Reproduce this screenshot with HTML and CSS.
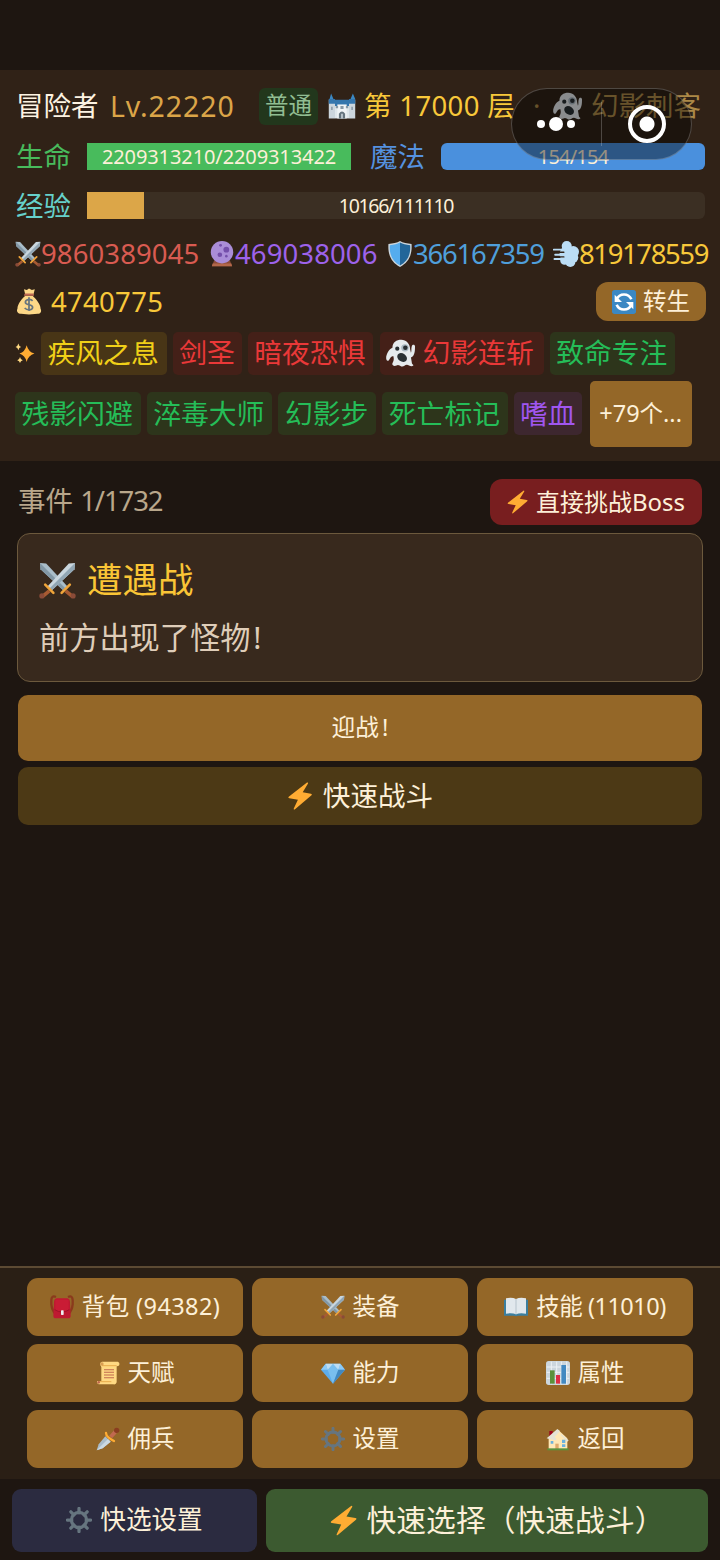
FILE: index.html
```html
<!DOCTYPE html>
<html lang="zh-CN">
<head>
<meta charset="utf-8">
<title>冒险者</title>
<link rel="stylesheet" href="styles.css">
</head>
<body>
<svg class="sprite" aria-hidden="true">
  <symbol id="swords" viewBox="0 0 36 36">
    <path d="M1 1l6 .5L28 24l-4 4L1.500 7z" fill="#a9bdc9"/><path d="M1 1l25 25-2 2L1.500 7z" fill="#8297a5"/>
    <path d="M35 1l-6 .5L8 24l4 4L34.500 7z" fill="#c9d6de"/><path d="M35 1L10 26l2 2L34.500 7z" fill="#91a6b4"/>
    <path d="M10 28l-7 6M26 28l7 6" stroke="#a85b32" stroke-width="3.500"/><path d="M6 22l8 8M30 22l-8 8" stroke="#f0a53a" stroke-width="2.500" stroke-linecap="round"/>
    <circle cx="2.800" cy="33" r="2.500" fill="#8a4b38"/><circle cx="33.200" cy="33" r="2.500" fill="#8a4b38"/>
  </symbol>
  <symbol id="castle" viewBox="0 0 36 36">
    <path d="M2 9L4 2l3 7zM29 9l3-7 3 7z" fill="#3b88c3"/><path d="M1 10h8v24H1zM27 10h8v24h-8z" fill="#ccd6dd"/><path d="M1 9h8v6H1zM27 9h8v6h-8zM9 10h18v8H9z" fill="#3476ad"/>
    <path d="M9 18h18v16H9z" fill="#dfe7eb"/><path d="M12 16h12v18H12z" fill="#f0f4f6"/><path d="M10 18h3v3h-3zM16 18h4v4h-4zM23 18h3v3h-3zM4 19h2v4H4zM30 19h2v4h-2z" fill="#8899a6"/><path d="M14 34v-6q4-6 8 0v6z" fill="#66757f"/><path d="M17 28h2v6h-2z" fill="#ccd6dd"/>
  </symbol>
  <symbol id="ghost" viewBox="0 0 36 36">
    <path d="M8 11C8 4 13 1 19 1s11 5 11 12l1 4c1-2 0-5 1-8 1-3 4-2 4 0 0 5 0 12-5 14l1 6c0 3 2 2 2 4-3 2-6-1-8-1-3 0-4 3-7 2-2-1-4-3-6-1-3 1-6 0-5-3 2-3 2-6 1-9-5 1-4 6-7 6-4-1-1-13 6-16z" fill="#e6eaed"/>
    <circle cx="14" cy="12" r="2.600" fill="#292f33"/><circle cx="23.500" cy="11" r="4.600" fill="#aab8c2"/><circle cx="24" cy="11" r="2.800" fill="#292f33"/><ellipse cx="20" cy="23" rx="6.500" ry="5" transform="rotate(35 20 23)" fill="#292f33"/>
  </symbol>
  <symbol id="ball" viewBox="0 0 36 36">
    <path d="M7 27h22l3 8H4z" fill="#8a4b38"/><path d="M5 31h26l1 4H4z" fill="#b3684a"/><circle cx="18" cy="15.500" r="15.500" fill="#aa8dd8"/><circle cx="24" cy="12" r="4" fill="#744eaa"/><circle cx="15" cy="19" r="3.200" fill="#744eaa"/><circle cx="16" cy="6" r="2" fill="#744eaa"/><circle cx="24" cy="21" r="1.800" fill="#744eaa"/>
  </symbol>
  <symbol id="shield" viewBox="0 0 36 36">
    <path d="M18 0c4 3 10 3 16 4 1 14-3 25-16 32C5 29 1 18 2 4c6-1 12-1 16-4z" fill="#ccd6dd"/><path d="M18 2v32C7 28 3 18 4 6c6-1 10-2 14-4z" fill="#55acee"/><path d="M18 2v32c11-6 15-16 14-28-6-1-10-2-14-4z" fill="#226699"/>
  </symbol>
  <symbol id="dash" viewBox="0 0 36 36">
    <g fill="#bbddf5"><circle cx="19" cy="7" r="7"/><circle cx="28" cy="15" r="8"/><circle cx="28" cy="23" r="7"/><circle cx="24" cy="29" r="7"/><circle cx="16" cy="27" r="6"/><circle cx="20" cy="18" r="11"/></g>
    <path d="M1 12h14M3 19h11M2 25h14" fill="none" stroke="#bbddf5" stroke-width="2.600" stroke-linecap="round"/><path d="M3 15.500h12M5 22h10" fill="none" stroke="#302217" stroke-width="2" stroke-linecap="round"/>
  </symbol>
  <symbol id="money" viewBox="0 0 36 36">
    <path d="M11 1l4 1 3-2 4 2 4-1-2 8H13z" fill="#fdd888"/><path d="M13 10c-4 3-11 11-11 18-2 4 1 7 5 7l11 1 12-1c4 0 6-3 4-7 0-7-7-14-11-18z" fill="#fdd888"/><path d="M12 7h12l1 3H11z" fill="#bf6952"/><path d="M23 17c-3-3-10-2-10 2 0 5 10 2 10 7 0 4-7 5-11 1M18 12v19" fill="none" stroke="#67757f" stroke-width="2.400"/>
  </symbol>
  <symbol id="cycle" viewBox="0 0 36 36">
    <rect width="36" height="36" rx="4" fill="#3b88c3"/><path d="M7 14A12 12 0 0 1 29 14M29 22A12 12 0 0 1 7 22" fill="none" stroke="#fff" stroke-width="4"/><path d="M4 7v11h11zM32 29V18H21z" fill="#fff"/>
  </symbol>
  <symbol id="sparkles" viewBox="0 0 36 36">
    <path d="M21 4q3 12 14 15-11 3-14 15-3-12-13-15 10-3 13-15z" fill="#ffac33"/><path d="M6 1q1 5 5 6-4 1-5 6-1-5-5-6 4-1 5-6zM9 25q1 5 5 6-4 1-5 5-1-4-5-5 4-1 5-6z" fill="#ffd983"/>
  </symbol>
  <symbol id="bolt" viewBox="0 0 32 36">
    <path d="M25 .8L1.500 19q-1.500 1.600.8 2l11 1.800L8 34q-.6 2 1.200 1.200L30.800 17q1.400-1.600-.8-2l-10.500-1.800L26.300 2q.5-1.900-1.300-1.200z" fill="#ffac33"/>
  </symbol>
  <symbol id="pack" viewBox="0 0 36 36">
    <path d="M9 3Q2 0 2 8v6q1 9 6 14M27 3q7-3 7 5v6q-1 9-6 14" fill="none" stroke="#8a3a1c" stroke-width="3.500"/><path d="M10 5h16q4 1 4 6l1 20q0 4-4 4H9q-4 0-4-4l1-20q0-5 4-6z" fill="#be1931"/><path d="M8 7h20v16q-10 6-20 0z" fill="#c91c35"/><path d="M7 22q11 7 22 0" fill="none" stroke="#9e1228" stroke-width="1.500"/><rect x="16.500" y="23" width="4" height="7" rx="1" fill="#eceff1"/>
  </symbol>
  <symbol id="book" viewBox="0 0 36 36">
    <path d="M0 7h36v24H21l-3 1-3-1H0z" fill="#3b7f9f"/><path d="M3 5q9-2 15 1v23q-6-3-15-1zM33 5q-9-2-15 1v23q6-3 15-1z" fill="#e1e8ed"/><path d="M18 6v23" stroke="#b6c3cc" stroke-width="1.500"/>
  </symbol>
  <symbol id="scroll" viewBox="0 0 36 36">
    <path d="M9 1h24q3 1 2 5-1 2-4 2v24q-1 4-5 3H4q-4-2-2-5h6V9Q4 3 9 1z" fill="#ffd983"/><path d="M9 7h22M3 31h20" stroke="#e39f3d" stroke-width="1.200"/><circle cx="9" cy="4.500" r="2.500" fill="#d99e52"/><circle cx="4" cy="32" r="2" fill="#c1694f"/><path d="M12 13h15M12 17h15M12 21h15M12 25h15" stroke="#c1694f" stroke-width="1.600"/>
  </symbol>
  <symbol id="gem" viewBox="0 0 36 36">
    <path d="M7 4h22l7 9-18 21L0 13z" fill="#5dadec"/><path d="M7 4l3 9H0zM29 4l-3 9h10z" fill="#8ccaf7"/><path d="M7 4h22l-3 9H10z" fill="#bdddf4"/><path d="M18 4l8 9H10zM10 13h16l-8 21z" fill="#79bfef"/><path d="M26 13h10L18 34z" fill="#4289c1"/>
  </symbol>
  <symbol id="chart" viewBox="0 0 36 36">
    <rect width="36" height="36" rx="4" fill="#ccd6dd"/><path d="M8 1v34M16 1v34M23 1v34M31 1v34M1 9h34M1 17h34M1 26h34" stroke="#edf1f4" stroke-width="1.500"/><path d="M6 14h7v20H6z" fill="#5c913b"/><path d="M15 21h6v13h-6z" fill="#dd2e44"/><path d="M23 6h7v28h-7z" fill="#4289c1"/>
  </symbol>
  <symbol id="dagger" viewBox="0 0 36 36">
    <path d="M14 14l8 8L10 32 1 35l3-9z" fill="#aabdca"/><path d="M18 18L1 35l9-3 12-10z" fill="#ccd9e1"/><path d="M22 15l8-9" stroke="#c1694f" stroke-width="6"/><circle cx="31" cy="5" r="4" fill="#8a3d20"/><path d="M15 9q0 4 4 7t8 5" fill="none" stroke="#ffac33" stroke-width="3.500" stroke-linecap="round"/>
  </symbol>
  <symbol id="gear" viewBox="0 0 36 36">
    <path d="M18 2v6M18 28v6M2 18h6M28 18h6M6.700 6.700l4.300 4.300M25 25l4.300 4.300M29.300 6.700L25 11M11 25l-4.300 4.300" fill="none" stroke="currentColor" stroke-width="4.500" stroke-linecap="round"/><circle cx="18" cy="18" r="10.500" fill="none" stroke="currentColor" stroke-width="4.500"/>
  </symbol>
  <symbol id="house" viewBox="0 0 36 36">
    <path d="M5 6h5v9H5z" fill="#a0041e"/><path d="M4 16L18 4l14 13v16H4z" fill="#ffe8b6"/><path d="M1 17L17 3l4 3-8 9 3 3 7-7 11 9-2 2L22 12l-8 8-9-2z" fill="#e6e3d6"/><path d="M7 21h4v4H7zM24 19h5v5h-5zM24 26h5v4h-5z" fill="#6cb2dd"/><path d="M14 25h5v8h-5z" fill="#dfaa6a"/><path d="M2 32h32v3H2z" fill="#5c913b"/>
  </symbol>
</svg>

<div class="app">
  <header class="hero">
    <div class="row title-row">
      <span class="name">冒险者</span>
      <span class="level">Lv.22220</span>
      <span class="mode">普通</span>
      <svg class="ic ic-castle"><use href="#castle"/></svg>
      <span class="floor">第 17000 层</span>
      <span class="job"><span class="sep">·</span><svg class="ic"><use href="#ghost"/></svg><span>幻影刺客</span></span>
    </div>
    <div class="row">
      <span class="label hp">生命</span>
      <div class="bar hp-bar"><span class="hp-text">2209313210/2209313422</span></div>
      <span class="label mp">魔法</span>
      <div class="bar mp-bar"><span class="mp-text">154/154</span></div>
    </div>
    <div class="row">
      <span class="label xp">经验</span>
      <div class="bar xp-bar"><div class="fill" style="width:9.15%"></div><span class="xp-text">10166/111110</span></div>
    </div>
    <div class="row stats">
      <span class="stat atk"><svg class="ic"><use href="#swords"/></svg>9860389045</span>
      <span class="stat mag"><svg class="ic"><use href="#ball"/></svg>469038006</span>
      <span class="stat def"><svg class="ic"><use href="#shield"/></svg>366167359</span>
      <span class="stat spd"><svg class="ic"><use href="#dash"/></svg>819178559</span>
    </div>
    <div class="row gold-row">
      <span class="gold"><svg class="ic"><use href="#money"/></svg>4740775</span>
      <button class="rebirth"><svg class="ic"><use href="#cycle"/></svg>转生</button>
    </div>
    <div class="tags first">
      <svg class="ic ic-spark"><use href="#sparkles"/></svg>
      <span class="tag gold-tag">疾风之息</span>
      <span class="tag red-tag">剑圣</span>
      <span class="tag red-tag">暗夜恐惧</span>
      <span class="tag red-tag ghost-tag"><svg class="ic"><use href="#ghost"/></svg>幻影连斩</span>
      <span class="tag green-tag">致命专注</span>
    </div>
    <div class="tags">
      <span class="tag green-tag">残影闪避</span>
      <span class="tag green-tag">淬毒大师</span>
      <span class="tag green-tag">幻影步</span>
      <span class="tag green-tag">死亡标记</span>
      <span class="tag purple-tag">嗜血</span>
      <button class="more">+79个...</button>
    </div>
  </header>

  <main class="main">
    <div class="event-head">
      <span class="event-count">事件 <span class="count">1/1732</span></span>
      <button class="boss"><svg class="ic"><use href="#bolt"/></svg>直接挑战Boss</button>
    </div>
    <section class="card">
      <h2><svg class="ic"><use href="#swords"/></svg>遭遇战</h2>
      <p>前方出现了怪物<span class="bang">!</span></p>
    </section>
    <button class="fight">迎战<span class="bang">!</span></button>
    <button class="fight quick"><svg class="ic"><use href="#bolt"/></svg>快速战斗</button>
  </main>

  <nav class="menu">
    <button class="bag"><svg class="ic"><use href="#pack"/></svg>背包 (94382)</button>
    <button><svg class="ic"><use href="#swords"/></svg>装备</button>
    <button class="skill"><svg class="ic"><use href="#book"/></svg>技能 (11010)</button>
    <button><svg class="ic"><use href="#scroll"/></svg>天赋</button>
    <button><svg class="ic"><use href="#gem"/></svg>能力</button>
    <button><svg class="ic"><use href="#chart"/></svg>属性</button>
    <button><svg class="ic"><use href="#dagger"/></svg>佣兵</button>
    <button><svg class="ic gear"><use href="#gear"/></svg>设置</button>
    <button><svg class="ic"><use href="#house"/></svg>返回</button>
  </nav>
  <footer class="dock">
    <button class="dock-set"><svg class="ic gear"><use href="#gear"/></svg>快选设置</button>
    <button class="dock-go"><svg class="ic"><use href="#bolt"/></svg>快速选择（快速战斗<span class="close">）</span></button>
  </footer>

  <div class="capsule">
    <div class="capsule-half"><i class="dot"></i><i class="dot big"></i><i class="dot"></i></div>
    <div class="capsule-line"></div>
    <div class="capsule-half"><i class="ring"></i></div>
  </div>
</div>
</body>
</html>
```
FILE: styles.css
```css
* { box-sizing: border-box; }
body { margin: 0; background: #1e1611; }
.app {
  position: relative;
  display: flex;
  flex-direction: column;
  width: 720px;
  height: 1560px;
  padding-top: 70px;
  overflow: hidden;
  background: #1e1611;
  color: #fdf0d8;
  font: 400 27.5px/1 "Noto Sans", "Noto Sans CJK SC", sans-serif;
  white-space: nowrap;
}
.sprite { position: absolute; width: 0; height: 0; }
.ic { display: block; flex: none; width: 26px; height: 26px; }
button {
  display: flex;
  align-items: center;
  justify-content: center;
  margin: 0;
  padding: 0;
  border: 0;
  font: inherit;
  color: inherit;
  background: #946728;
  white-space: nowrap;
}

.hero { flex: none; height: 391px; padding: 10px 15px 0 16px; background: #302217; }
.row { display: flex; align-items: center; height: 49px; }
.title-row { height: 52px; }
.name { width: 94px; color: #fdf3e2; }
.level { width: 149px; color: #dba548; font-size: 28.5px; letter-spacing: .9px; }
.mode {
  display: flex;
  align-items: center;
  justify-content: center;
  width: 59px;
  height: 37px;
  margin-right: 10px;
  border-radius: 6px;
  background: #22371c;
  color: #91bd92;
  font-size: 23.5px;
}
.ic-castle { width: 28px; height: 28px; margin-right: 8px; }
.floor { width: 169px; color: #f8c83a; letter-spacing: .35px; }
.job { display: flex; align-items: center; width: 172px; color: #ac8947; }
.job .sep { width: 20px; }
.job .ic { width: 29px; height: 29px; margin-right: 9px; }
.label { width: 71px; }
.hp { color: #48bb5c; }
.mp { width: 71px; margin-left: 19px; color: #5591df; }
.xp { color: #66d1cb; }
.bar {
  position: relative;
  display: flex;
  align-items: center;
  justify-content: center;
  height: 27.5px;
  font-size: 20px;
  overflow: hidden;
}
.hp-bar { width: 264px; background: #48bb5c; }
.mp-bar { width: 264px; border-radius: 6px; background: #4a90dd; }
.xp-bar { width: 618px; border-radius: 0 6px 6px 0; background: #3b2f23; }
.fill { position: absolute; left: 0; top: 0; bottom: 0; background: #dca648; }
.xp-text { letter-spacing: -1.3px; font-size: 19.5px; }
.mp-text { letter-spacing: -.8px; }
.hp-text { letter-spacing: -.1px; }

.stats { height: 48px; }
.stat { display: flex; align-items: center; flex: none; margin-left: -1px; }
.atk { width: 195px; color: #d95b51; letter-spacing: .1px; }
.mag { width: 179px; color: #9d62eb; letter-spacing: .1px; }
.def { width: 167px; color: #4f9fdb; letter-spacing: -1.2px; }
.spd { color: #f8c83a; letter-spacing: -1.4px; }
.gold-row { height: 47px; justify-content: space-between; }
.gold { display: flex; align-items: center; gap: 9px; color: #f8c83a; letter-spacing: .3px; }
.gold .ic { height: 29px; }
.rebirth { width: 110px; height: 39px; margin-right: -1px; border-radius: 12px; gap: 7px; font-size: 23.5px; }
.rebirth .ic { width: 24px; height: 24px; }

.tags { display: flex; align-items: center; gap: 6px; height: 66px; margin-left: -1px; }
.tags.first { height: 42px; margin: 7px 0 6.5px -1px; }
.ic-spark { width: 20px; height: 20px; }
.tag { display: flex; align-items: center; flex: none; height: 43px; padding: 0 8px 0 6.5px; border-radius: 5px; font-size: 27.8px; }
.gold-tag { color: #f0d018; background: #483516; }
.red-tag { color: #ea3838; background: #442018; padding-right: 7px; }
.ghost-tag { padding: 0 10px 0 6px; margin-left: 1px; }
.ghost-tag .ic { width: 29px; height: 29px; margin-right: 8px; }
.green-tag { color: #25bd58; background: #2d351b; }
.purple-tag { color: #a056f0; background: #3d272f; padding: 0 6px; }
.more { width: 102px; height: 66px; margin-left: 2px; border-radius: 5px; font-size: 23.5px; }

.main { flex: 1; padding: 18px 18px 0; }
.event-head { display: flex; align-items: center; justify-content: space-between; height: 46px; }
.event-count { margin-top: -2px; color: #b9a78b; }
.count { letter-spacing: -1.1px; }
.boss { width: 212px; height: 46px; border-radius: 12px; background: #781e1f; font-size: 24px; gap: 8px; }
.boss .ic { width: 21px; height: 24px; }
.card {
  height: 149px;
  margin: 8px -1px 13px;
  padding: 26px 21px 0;
  border: 1.5px solid #6c593d;
  border-radius: 13px;
  background: #38291d;
}
.card h2 { display: flex; align-items: center; gap: 11px; height: 40px; margin: 0 0 18px; color: #fac536; font-size: 35.5px; font-weight: 400; }
.card h2 .ic { width: 37px; height: 37px; }
.card p { margin: 0; height: 40px; line-height: 40px; color: #dfcdb9; font-size: 30.2px; }
.bang { margin-left: 3px; }
.fight { width: 100%; height: 66px; margin-bottom: 6px; border-radius: 10px; font-size: 23.7px; }
.quick { height: 58px; background: #4c3915; font-size: 27.6px; gap: 10px; }
.quick .ic { height: 28px; }

.menu {
  flex: none;
  display: grid;
  grid-template-columns: repeat(3, 216px);
  grid-auto-rows: 57.5px;
  justify-content: center;
  gap: 8.5px 9px;
  height: 213px;
  padding-top: 10px;
  border-top: 2px solid #5c4a33;
  background: #2a1f15;
}
.menu button { border-radius: 11px; font-size: 23.5px; gap: 8px; }
.menu .ic { width: 24px; height: 24px; }
.menu .bag { letter-spacing: .4px; }
.menu .skill { letter-spacing: -.5px; }
.gear { color: #66757f; }
.dock { flex: none; display: flex; gap: 9px; height: 81px; padding: 9.5px 12px 8px; }
.dock-set { width: 245px; border-radius: 9px; background: #2b2b40; font-size: 25.6px; gap: 8px; }
.dock-go { width: 442px; border-radius: 9px; background: #3c5a30; font-size: 29.8px; }
.dock-go .ic { width: 27px; height: 31px; margin-right: 10px; }
.close { margin-right: -20px; }

/* Floating control that overlaps the header */
.capsule {
  position: absolute;
  left: 511px;
  top: 88px;
  display: flex;
  align-items: center;
  width: 181px;
  height: 72px;
  border: 1.5px solid rgba(255,255,255,.22);
  border-radius: 36px;
  background: rgba(0,0,0,.4);
}
.capsule-half { flex: 1; display: flex; align-items: center; justify-content: center; gap: 4px; }
.capsule-line { width: 1.5px; height: 44px; background: rgba(255,255,255,.22); }
.dot { width: 8px; height: 8px; border-radius: 50%; background: #fff; }
.dot.big { width: 14px; height: 14px; }
.ring { width: 38px; height: 38px; border: 4px solid #fff; border-radius: 50%; background: radial-gradient(circle, #fff 7px, transparent 8px); }
```
